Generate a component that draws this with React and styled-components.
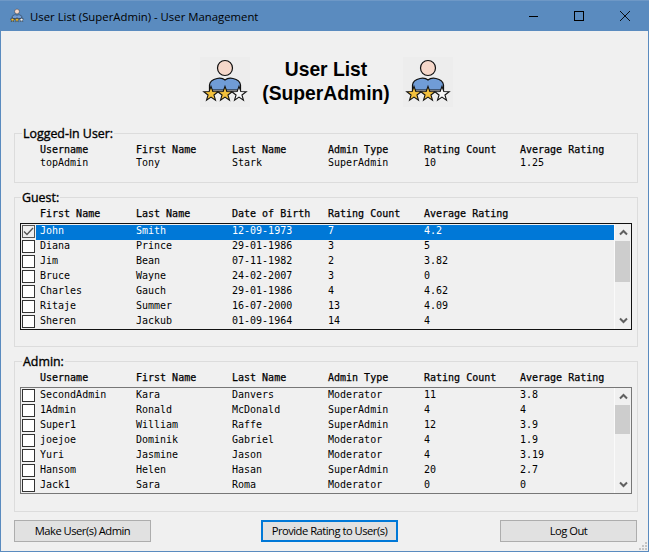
import React from "react";
import styled, { createGlobalStyle } from "styled-components";

const Global = createGlobalStyle`
  html, body { margin: 0; padding: 0; background: #f0f0f0; }
  #root { width: 649px; height: 552px; overflow: hidden; }
  * { box-sizing: border-box; }
`;

const Win = styled.div`
  position: relative; width: 649px; height: 552px; display: flex; flex-direction: column;
  background: #f0f0f0; border: 1px solid #5a8bbf; border-top: none;
`;
const TitleBar = styled.div`
  height: 31px; flex: none; margin: 0 -1px; padding: 0 19px 0 9px; background: #5a8bbf;
  display: flex; align-items: center; gap: 5px;
  border-top: 1px solid #6e98c6;
`;
const TitleText = styled.div`
  flex: 1; font: 11.35px "Open Sans", sans-serif; color: #000; white-space: nowrap;
`;
const WinButtons = styled.div`display: flex; gap: 36px; align-items: center; margin-top: -1px;`;
const Content = styled.div`flex: 1; display: flex; flex-direction: column; padding: 0 10px 0 13px;`;
const Header = styled.div`
  height: 102px; flex: none; display: flex; justify-content: center; align-items: flex-start;
  gap: 11px; padding-top: 26px;
`;
const Heading = styled.h1`
  margin: 1px 0 0; width: 131px; text-align: center;
  font: bold 19.3px/24px "Liberation Sans", sans-serif; color: #000; white-space: nowrap;
`;
const Group = styled.section`
  position: relative; height: ${p => p.$h}px; flex: none; margin-bottom: ${p => p.$mb}px;
  border: 1px solid #dcdcdc; padding: ${p => p.$pt}px 5px 0 5px;
`;
const Legend = styled.div`
  position: absolute; left: ${p => p.$left}px; top: -7px; padding: 0 1px; background: #f0f0f0;
  font: 12.4px/13px "Open Sans", sans-serif; color: #000; -webkit-text-stroke: 0.35px #000; white-space: nowrap;
`;
const Cols = styled.div`
  display: grid; grid-template-columns: repeat(${p => p.$n}, 96px); padding-left: 20px; height: ${p => p.$h || 13}px;
  font: 10px/13px "DejaVu Sans Mono", monospace; color: #000; white-space: pre;
  ${p => p.$head && "-webkit-text-stroke: 0.25px #000;"}
`;
const ListBox = styled.div`
  position: relative; height: 107px; width: 612px; margin-top: ${p => p.$mt}px;
  border: 1px solid ${p => p.$active ? "#111" : "#777"}; padding: 1px 0 0 1px; display: flex;
`;
const Rows = styled.div`flex: 1; min-width: 0;`;
const Row = styled.div`
  display: flex; height: 15px; align-items: flex-start;
`;
const Box = styled.span`
  flex: none; width: 13px; height: 13px; margin-right: 1px; background: ${p => p.$checked ? "#efefef" : "#fff"};
  border: 1px solid ${p => p.$checked ? "#555" : "#333"}; display: flex; align-items: center; justify-content: center;
`;
const RowBody = styled.div`
  flex: 1; height: 15px; display: grid; grid-template-columns: repeat(${p => p.$n}, 96px); padding-left: 4px;
  font: 10px/12px "DejaVu Sans Mono", monospace; white-space: pre;
  background: ${p => p.$sel ? "#0078d7" : "transparent"}; color: ${p => p.$sel ? "#fff" : "#000"};
`;
const Scroll = styled.div`
  width: 17px; flex: none; margin-top: -1px; border-left: 1px solid #fafafa; display: flex; flex-direction: column;
  align-items: center; background: #f0f0f0; position: relative;
`;
const Arrow = styled.div`height: 17px; flex: none; display: flex; align-items: center; justify-content: center;`;
const Track = styled.div`flex: 1; width: 100%;`;
const Thumb = styled.div`
  height: ${p => p.$h}px; margin: ${p => p.$top}px 1px 0 0; background: #cdcdcd;
`;
const Footer = styled.div`display: flex; justify-content: space-between; padding-right: 1px;`;
const Btn = styled.button`
  width: 137px; height: 22px; padding: 0 0 1px; margin: 0 0 0 ${p => p.$focus ? 8 : 0}px; background: #e1e1e1;
  border: ${p => p.$focus ? "2px solid #0078d7" : "1px solid #adadad"};
  font: 11.2px "Open Sans", sans-serif; letter-spacing: -0.5px; color: #000; white-space: nowrap;
`;
const Grip = styled.svg`position: absolute; right: 0; bottom: 0;`;

const star = (cx, cy, R = 7.6, r = 3.1) => {
  const pts = [];
  for (let i = 0; i < 10; i++) {
    const a = -Math.PI / 2 + (i * Math.PI) / 5;
    const rad = i % 2 ? r : R;
    pts.push(`${(cx + rad * Math.cos(a)).toFixed(2)},${(cy + rad * Math.sin(a)).toFixed(2)}`);
  }
  return pts.join(" ");
};

const UserIcon = ({ size = 50 }) => (
  <svg width={size} height={size} viewBox="0 0 50 50" style={{ flex: "none" }}>
    {size > 20 && <rect x="0" y="0" width="50" height="50" fill="#ededed" />}
    <circle cx="25" cy="11" r="7.5" fill="#f6d8ca" stroke="#111" strokeWidth="1.2" />
    <path d="M9.5 33 V28 Q10 23 17 21.5 Q22 20.5 25 23 Q28 20.5 33 21.5 Q40 23 40.5 28 V33 Z" fill="#709cd6" stroke="#111" strokeWidth="1.2" />
    <polygon points={star(11, 37)} fill="#f3c13d" stroke="#111" strokeWidth="1.1" />
    <polygon points={star(25, 37)} fill="#f3c13d" stroke="#111" strokeWidth="1.1" />
    <polygon points={star(39, 37)} fill="#f6f6f6" stroke="#111" strokeWidth="1.1" />
  </svg>
);

const Chevron = ({ up }) => (
  <svg width="9" height="7" viewBox="0 0 9 7">
    <path d={up ? "M1 5.5 L4.5 2 L8 5.5" : "M1 1.5 L4.5 5 L8 1.5"} fill="none" stroke="#606060" strokeWidth="2" />
  </svg>
);

const Check = () => (
  <svg width="11" height="11" viewBox="0 0 11 11">
    <path d="M1 5.5 L4 8.5 L10 2" fill="none" stroke="#555" strokeWidth="1.3" />
  </svg>
);

const guests = [
  ["John", "Smith", "12-09-1973", "7", "4.2"],
  ["Diana", "Prince", "29-01-1986", "3", "5"],
  ["Jim", "Bean", "07-11-1982", "2", "3.82"],
  ["Bruce", "Wayne", "24-02-2007", "3", "0"],
  ["Charles", "Gauch", "29-01-1986", "4", "4.62"],
  ["Ritaje", "Summer", "16-07-2000", "13", "4.09"],
  ["Sheren", "Jackub", "01-09-1964", "14", "4"],
];
const admins = [
  ["SecondAdmin", "Kara", "Danvers", "Moderator", "11", "3.8"],
  ["1Admin", "Ronald", "McDonald", "SuperAdmin", "4", "4"],
  ["Super1", "William", "Raffe", "SuperAdmin", "12", "3.9"],
  ["joejoe", "Dominik", "Gabriel", "Moderator", "4", "1.9"],
  ["Yuri", "Jasmine", "Jason", "Moderator", "4", "3.19"],
  ["Hansom", "Helen", "Hasan", "SuperAdmin", "20", "2.7"],
  ["Jack1", "Sara", "Roma", "Moderator", "0", "0"],
];
const adminHead = ["Username", "First Name", "Last Name", "Admin Type", "Rating Count", "Average Rating"];

const Line = ({ cells, head, h }) => (
  <Cols $n={cells.length} $head={head} $h={h}>{cells.map(c => <span key={c}>{c}</span>)}</Cols>
);

const List = ({ rows, active, selected, thumbH, mt }) => (
  <ListBox $active={active} $mt={mt}>
    <Rows>
      {rows.map((r, i) => (
        <Row key={r[0]}>
          <Box $checked={selected === i}>{selected === i && <Check />}</Box>
          <RowBody $n={r.length} $sel={selected === i}>{r.map((c, j) => <span key={j}>{c}</span>)}</RowBody>
        </Row>
      ))}
    </Rows>
    <Scroll>
      <Arrow><Chevron up /></Arrow>
      <Track><Thumb $top={0} $h={thumbH} /></Track>
      <Arrow><Chevron /></Arrow>
    </Scroll>
  </ListBox>
);

export default function App() {
  return (
    <Win>
      <Global />
      <TitleBar>
        <UserIcon size={16} />
        <TitleText>User List (SuperAdmin) - User Management</TitleText>
        <WinButtons>
          <svg width="10" height="10" viewBox="0 0 10 10"><path d="M1 5.5H10" stroke="#000" /></svg>
          <svg width="10" height="10" viewBox="0 0 10 10"><rect x=".5" y=".5" width="9" height="9" fill="none" stroke="#000" /></svg>
          <svg width="10" height="10" viewBox="0 0 10 10"><path d="M0 0L10 10M10 0L0 10" stroke="#000" strokeWidth=".9" /></svg>
        </WinButtons>
      </TitleBar>
      <Content>
        <Header>
          <UserIcon />
          <Heading>User List<br />(SuperAdmin)</Heading>
          <UserIcon />
        </Header>
        <Group $h={50} $mb={14} $pt={9}>
          <Legend $left={7}>Logged-in User:</Legend>
          <Line head cells={adminHead} />
          <Line cells={["topAdmin", "Tony", "Stark", "SuperAdmin", "10", "1.25"]} />
        </Group>
        <Group $h={150} $mb={14} $pt={9}>
          <Legend $left={6}>Guest:</Legend>
          <Line head h={13} cells={["First Name", "Last Name", "Date of Birth", "Rating Count", "Average Rating"]} />
          <List rows={guests} active selected={0} thumbH={41} mt={3} />
        </Group>
        <Group $h={151} $mb={8} $pt={9}>
          <Legend $left={7}>Admin:</Legend>
          <Line head h={13} cells={adminHead} />
          <List rows={admins} thumbH={29} mt={3} />
        </Group>
        <Footer>
          <Btn>Make User(s) Admin</Btn>
          <Btn $focus>Provide Rating to User(s)</Btn>
          <Btn>Log Out</Btn>
        </Footer>
      </Content>
      <Grip width="10" height="10" viewBox="0 0 10 10">
        <path d="M7 1h2v2H7zM4 4h2v2H4zM7 4h2v2H7zM1 7h2v2H1zM4 7h2v2H4zM7 7h2v2H7z" fill="#c4c4c4" />
      </Grip>
    </Win>
  );
}
